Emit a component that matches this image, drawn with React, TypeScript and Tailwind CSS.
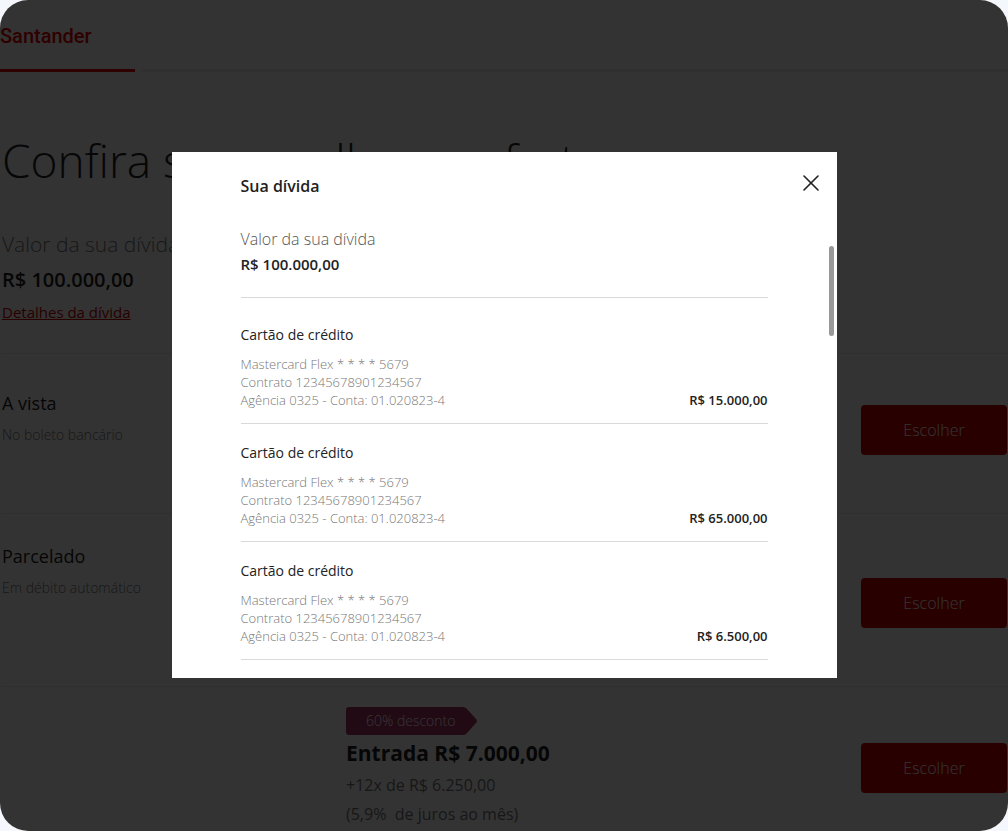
import { X } from "lucide-react";

const debts = [
  { id: 1, amount: "R$ 15.000,00" },
  { id: 2, amount: "R$ 65.000,00" },
  { id: 3, amount: "R$ 6.500,00" },
];

function ChooseButton() {
  return (
    <button
      type="button"
      className="h-[50px] w-[146px] shrink-0 rounded bg-[#cc0000] text-base font-light text-white"
    >
      Escolher
    </button>
  );
}

function DiscountBadge() {
  return (
    <div className="relative flex h-7 w-[131px] items-center pl-5">
      <svg
        className="absolute inset-0 h-full w-full"
        viewBox="0 0 131 28"
        preserveAspectRatio="none"
        aria-hidden="true"
      >
        <path
          d="M3 0h114q2 0 3.500 1.500l9.500 10.500q2 2 0 4l-9.500 10.500q-1.500 1.500-3.500 1.500H3q-3 0-3-3V3q0-3 3-3z"
          fill="#a83268"
        />
      </svg>
      <span className="relative text-sm font-light text-white">
        60% desconto
      </span>
    </div>
  );
}

function OffersPage() {
  return (
    <div className="h-full overflow-hidden bg-white text-[#222]">
      <header>
        <div className="flex h-[69px] items-center pt-[3px]">
          <span className="font-['Roboto','Open_Sans',sans-serif] text-xl font-medium text-[#ec0000]">
            Santander
          </span>
        </div>
        <div className="flex h-[3px] gap-1.5">
          <div className="w-[135px] bg-[#ec0000]" />
          <div className="flex-1 bg-[#f0f0f0]" />
        </div>
      </header>

      <main className="pl-0.5">
        <h1 className="mt-14 text-[46px] leading-[64px] font-light">
          Confira suas melhores ofertas
        </h1>

        <section className="mt-9 border-b border-[#e8e8e8] pb-[29px]">
          <p className="text-[21px] leading-8 font-light text-[#767676]">
            Valor da sua dívida
          </p>
          <p className="text-xl leading-10 font-semibold">R$ 100.000,00</p>
          <a
            href="#detalhes"
            className="text-[15px] leading-6 text-[#cc0000] underline"
          >
            Detalhes da dívida
          </a>
        </section>

        <section className="flex h-40 items-start justify-between border-b border-[#e8e8e8] pt-[35px]">
          <div>
            <h2 className="text-lg leading-7">A vista</h2>
            <p className="mt-2 text-sm font-light text-[#767676]">
              No boleto bancário
            </p>
          </div>
          <div className="mt-4 pr-px">
            <ChooseButton />
          </div>
        </section>

        <section className="flex h-[173px] items-start justify-between border-b border-[#e8e8e8] pt-7">
          <div>
            <h2 className="text-lg leading-7">Parcelado</h2>
            <p className="mt-2 text-sm font-light text-[#767676]">
              Em débito automático
            </p>
          </div>
          <div className="mt-9 pr-px">
            <ChooseButton />
          </div>
        </section>

        <section className="flex items-start justify-between pt-5">
          <div className="ml-[344px]">
            <DiscountBadge />
            <p className="mt-0.5 text-[21px] leading-8 font-bold">
              Entrada R$ 7.000,00
            </p>
            <p className="mt-0.5 text-base leading-[29px] text-[#767676]">
              +12x de R$ 6.250,00
            </p>
            <p className="text-base leading-[29px] whitespace-pre text-[#767676]">
              {"(5,9%  de juros ao mês)"}
            </p>
          </div>
          <div className="mt-9 pr-px">
            <ChooseButton />
          </div>
        </section>
      </main>
    </div>
  );
}

function DebtModal() {
  return (
    <div
      role="dialog"
      aria-modal="true"
      aria-labelledby="debt-title"
      className="relative w-full max-w-[665px] bg-white px-[69px] pt-[22px] pb-[18px] text-[#222]"
    >
      <h2 id="debt-title" className="text-base leading-6 font-semibold">
        Sua dívida
      </h2>
      <button
        type="button"
        aria-label="Fechar"
        className="absolute top-[17px] right-3"
      >
        <X size={28} strokeWidth={1.4} />
      </button>

      <div className="mt-[29px] border-b border-[#d9d9d9] pb-5 leading-[25px]">
        <p className="text-base leading-[25px] font-light text-[#555]">
          Valor da sua dívida
        </p>
        <p className="text-[15px] leading-[25px] font-semibold">
          R$ 100.000,00
        </p>
      </div>

      <ul className="mt-2">
        {debts.map((debt) => (
          <li
            key={debt.id}
            className="flex items-end justify-between border-b border-[#d9d9d9] pt-[17px] pb-3.5"
          >
            <div className="text-[13px] leading-[18px] font-light text-[#777]">
              <h3 className="mb-2 text-sm leading-6 font-normal text-[#222]">
                Cartão de crédito
              </h3>
              <p>Mastercard Flex * * * * 5679</p>
              <p>Contrato 12345678901234567</p>
              <p>Agência 0325 - Conta: 01.020823-4</p>
            </div>
            <span className="text-[13px] leading-[18px] font-semibold">
              {debt.amount}
            </span>
          </li>
        ))}
      </ul>

      <div className="absolute top-[94px] right-[3px] h-[90px] w-[5px] rounded-full bg-[#999]" />
    </div>
  );
}

export default function App() {
  return (
    <div className="h-screen bg-[#f4f7fc] font-['Open_Sans','Noto_Sans',sans-serif]">
      <div className="relative h-full overflow-hidden rounded-[28px]">
        <OffersPage />
        <div className="absolute inset-0 flex items-center justify-center bg-black/80 pb-px">
          <DebtModal />
        </div>
      </div>
    </div>
  );
}
